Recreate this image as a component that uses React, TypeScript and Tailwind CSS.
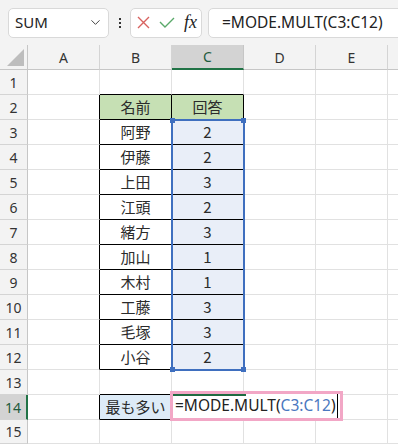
import React from 'react';
import { ChevronDown } from 'lucide-react';

type Row = { n: number; b?: string; c?: string };

const rows: Row[] = [
  { n: 1 },
  { n: 2, b: '名前', c: '回答' },
  { n: 3, b: '阿野', c: '2' },
  { n: 4, b: '伊藤', c: '2' },
  { n: 5, b: '上田', c: '3' },
  { n: 6, b: '江頭', c: '2' },
  { n: 7, b: '緒方', c: '3' },
  { n: 8, b: '加山', c: '1' },
  { n: 9, b: '木村', c: '1' },
  { n: 10, b: '工藤', c: '3' },
  { n: 11, b: '毛塚', c: '3' },
  { n: 12, b: '小谷', c: '2' },
  { n: 13 },
  { n: 14, b: '最も多い' },
  { n: 15 },
];

const jp = { fontFamily: '"Noto Sans CJK JP", "Noto Sans", sans-serif' };
const ui = { fontFamily: '"Noto Sans", "Open Sans", sans-serif' };

function Toolbar() {
  return (
    <div className="h-[45px] bg-[#f3f3f3] flex items-center overflow-hidden" style={ui}>
      <div className="ml-[8px] w-[101px] shrink-0 h-[30px] bg-white border border-[#d9d9d9] rounded-[5px] flex items-center justify-between pl-[6px] pr-[5px]">
        <span className="text-[15px] text-[#222]">SUM</span>
        <ChevronDown size={15} strokeWidth={1.6} className="text-[#444]" />
      </div>
      <div className="w-[21px] shrink-0 flex flex-col items-center gap-[2px]">
        <div className="w-[2px] h-[2px] bg-[#333]" />
        <div className="w-[2px] h-[2px] bg-[#333]" />
        <div className="w-[2px] h-[2px] bg-[#333]" />
      </div>
      <div className="w-[72px] shrink-0 h-[30px] bg-white border border-[#d9d9d9] rounded-[5px] flex items-center pl-[6px] gap-[9px]">
        <svg width="13" height="13" viewBox="0 0 13 13">
          <path d="M1 1 L12 12 M12 1 L1 12" stroke="#d8625f" strokeWidth="1.4" fill="none" />
        </svg>
        <svg width="16" height="11" viewBox="0 0 16 11">
          <path d="M1 5 L6 10 L15 1" stroke="#5aa96a" strokeWidth="1.4" fill="none" />
        </svg>
        <span className="italic text-[18px] leading-none text-[#222] -mt-[2px]" style={{ fontFamily: '"Liberation Serif", serif' }}>
          fx
        </span>
      </div>
      <div className="ml-[6px] w-[220px] shrink-0 h-[30px] bg-white border border-[#d9d9d9] rounded-[5px] flex items-center pl-[13px]">
        <span className="text-[15.5px] text-[#222] whitespace-nowrap">=MODE.MULT(C3:C12)</span>
      </div>
    </div>
  );
}

function ColHeader() {
  const cols = ['A', 'B', 'C', 'D', 'E'];
  return (
    <div className="flex h-[25px]" style={ui}>
      <div className="w-[28px] shrink-0 bg-[#f3f3f3] border-r border-b border-r-[#c6c6c6] border-b-[#c6c6c6] flex items-end justify-end pr-[3px] pb-[3px]">
        <svg width="17" height="17" viewBox="0 0 17 17">
          <path d="M17 0 L17 17 L0 17 Z" fill="#bdbdbd" />
        </svg>
      </div>
      {cols.map((c) =>
        c === 'C' ? (
          <div
            key={c}
            className="w-[72px] shrink-0 bg-[#d3d3d3] border-r border-r-[#c6c6c6] border-b-2 border-b-[#217346] flex items-center justify-center text-[14px] text-[#1e5a3c]"
          >
            {c}
          </div>
        ) : (
          <div
            key={c}
            className="w-[72px] shrink-0 bg-[#f3f3f3] border-r border-b border-r-[#d4d4d4] border-b-[#c6c6c6] flex items-center justify-center text-[14px] text-[#333]"
          >
            {c}
          </div>
        )
      )}
      <div className="flex-1 bg-[#f3f3f3] border-b border-b-[#c6c6c6]" />
    </div>
  );
}

function SheetRow({ r }: { r: Row }) {
  const inTable = r.n >= 2 && r.n <= 12;
  const isHead = r.n === 2;
  const isMost = r.n === 14;
  const h = r.n === 15 ? 'h-[24px]' : 'h-[25px]';

  const rowHead = isMost
    ? 'w-[28px] shrink-0 bg-[#d3d3d3] border-r-2 border-b border-r-[#217346] border-b-[#d4d4d4] flex items-center justify-center text-[14px] text-[#1e5a3c]'
    : 'w-[28px] shrink-0 bg-[#f3f3f3] border-r border-b border-r-[#c6c6c6] border-b-[#d4d4d4] flex items-center justify-center text-[14px] text-[#333]';

  const aCls =
    inTable || isMost
      ? 'w-[72px] shrink-0 border-r border-b border-r-black border-b-[#e1e1e1]'
      : 'w-[72px] shrink-0 border-r border-b border-r-[#e1e1e1] border-b-[#e1e1e1]';

  let bCls = 'w-[72px] shrink-0 border-r border-b border-r-[#e1e1e1] border-b-[#e1e1e1]';
  if (r.n === 1 || r.n === 13) bCls = 'w-[72px] shrink-0 border-r border-b border-r-[#e1e1e1] border-b-black';
  if (isHead) bCls = 'w-[72px] shrink-0 bg-[#c6e0b4] border-r border-b border-r-black border-b-black';
  else if (inTable) bCls = 'w-[72px] shrink-0 bg-white border-r border-b border-r-black border-b-black';
  if (isMost) bCls = 'w-[72px] shrink-0 bg-[#ddebf7] border-r border-b border-r-black border-b-black';

  let cCls = 'w-[72px] shrink-0 border-r border-b border-r-[#e1e1e1] border-b-[#e1e1e1]';
  if (r.n === 1) cCls = 'w-[72px] shrink-0 border-r border-b border-r-[#e1e1e1] border-b-black';
  if (isHead) cCls = 'w-[72px] shrink-0 bg-[#c6e0b4] border-r border-b border-r-black border-b-black';
  else if (inTable) cCls = 'w-[72px] shrink-0 bg-[#e9eef8] border-r border-b border-r-black border-b-black';

  const plain = 'w-[72px] shrink-0 border-r border-b border-r-[#e1e1e1] border-b-[#e1e1e1]';

  return (
    <div className={`flex ${h}`}>
      <div className={rowHead} style={ui}>
        {r.n}
      </div>
      <div className={aCls} />
      <div className={`${bCls} flex items-center justify-center text-[15px] text-[#2b2b2b] whitespace-nowrap`} style={jp}>
        {r.b}
      </div>
      <div className={`${cCls} flex items-center justify-center text-[15px] text-[#2b2b2b]`} style={jp}>
        {r.c}
      </div>
      <div className={plain} />
      <div className={plain} />
      <div className="flex-1 border-b border-b-[#e1e1e1]" />
    </div>
  );
}

function Handle({ className }: { className: string }) {
  return <div className={`absolute w-[5px] h-[5px] bg-[#3f6fbf] ${className}`} />;
}

export default function App() {
  return (
    <div className="w-[398px] h-[444px] bg-white overflow-hidden">
      <Toolbar />
      <div className="relative">
        <ColHeader />
        {rows.map((r) => (
          <SheetRow key={r.n} r={r} />
        ))}

        {/* reference range C3:C12 */}
        <div className="absolute left-[171px] top-[74px] w-[74px] h-[252px] border-2 border-[#3f6fbf]" />
        <Handle className="left-[170px] top-[73px]" />
        <Handle className="left-[241px] top-[73px]" />
        <Handle className="left-[170px] top-[322px]" />
        <Handle className="left-[241px] top-[322px]" />

        {/* cell being edited, C14 */}
        <div className="absolute left-[170px] top-[346px] w-[173px] h-[30px] border-[3px] border-[#f2a7c6] bg-white flex items-center pl-[2px]" style={ui}>
          <div className="absolute left-0 top-0 w-[73px] h-[2px] bg-[#1e6b41]" />
          <span className="text-[15.5px] text-[#222] whitespace-nowrap">
            =MODE.MULT(<span className="text-[#4a78c0]">C3:C12</span>)
          </span>
          <div className="w-[1.5px] h-[24px] bg-black ml-[1px]" />
        </div>
      </div>
    </div>
  );
}
